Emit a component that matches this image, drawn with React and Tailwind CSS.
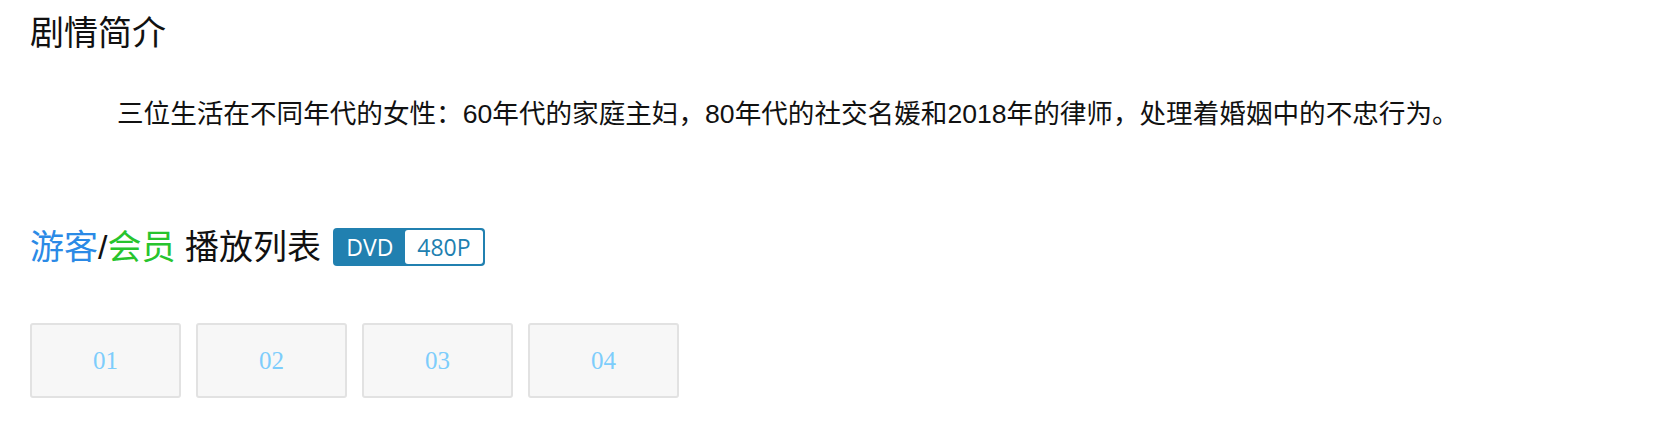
const episodes = ["01", "02", "03", "04"];

const cjk = { fontFamily: '"Liberation Sans", "Noto Sans CJK SC", sans-serif' };

export default function App() {
  return (
    <div className="w-[1656px] h-[436px] bg-white px-[30px] pt-[13px] text-[#111]" style={cjk}>
      {/* 标题 */}
      <h2 className="text-[34px] leading-[40px] font-normal">剧情简介</h2>

      {/* 简介 */}
      <p className="mt-[43px] pl-[87px] text-[26.6px] leading-[36px]">
        三位生活在不同年代的女性：60年代的家庭主妇，80年代的社交名媛和2018年的律师，处理着婚姻中的不忠行为。
      </p>

      {/* 播放列表标题 */}
      <div className="mt-[95px] flex items-center">
        <h3 className="text-[34px] leading-[40px] font-normal">
          <span className="text-[#2b8ae6]">游客</span>
          <span>/</span>
          <span className="text-[#27c42d]">会员</span> 播放列表
        </h3>
        <div
          className="ml-[12px] flex h-[38px] w-[152px] items-stretch rounded-[4px] bg-[#2180b0] p-[2px]"
          style={{ fontFamily: '"Open Sans", sans-serif' }}
        >
          <span className="flex w-[70px] items-center justify-center text-[23px] font-medium text-white">
            DVD
          </span>
          <span className="flex flex-1 items-center justify-center rounded-[3px] bg-white text-[23px] text-[#2180b0]">
            480P
          </span>
        </div>
      </div>

      {/* 集数 */}
      <div className="mt-[56px] flex gap-[15px]">
        {episodes.map((ep) => (
          <button
            key={ep}
            className="flex h-[75px] w-[151px] items-center justify-center rounded-[3px] border-2 border-[#e2e2e2] bg-[#f7f7f7] text-[25px] text-[#7dcdfc]"
            style={{ fontFamily: '"Liberation Serif", serif' }}
          >
            {ep}
          </button>
        ))}
      </div>
    </div>
  );
}
